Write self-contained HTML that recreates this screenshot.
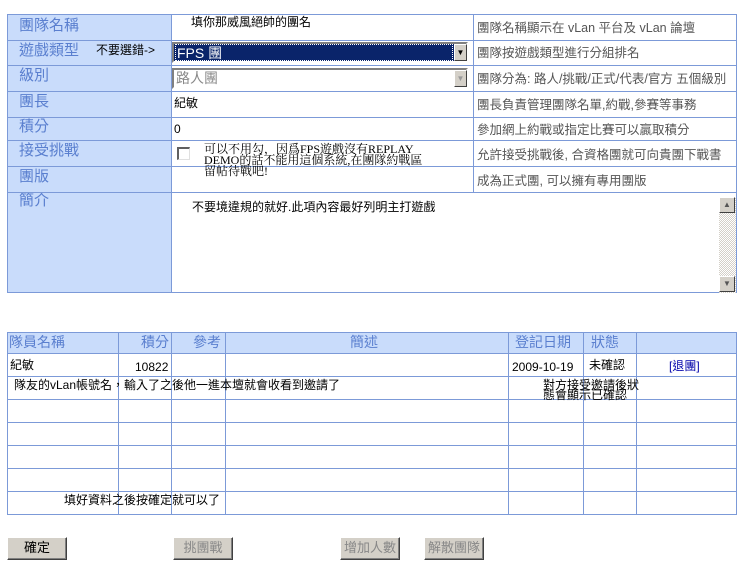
<!DOCTYPE html>
<html><head><meta charset="utf-8"><style>
body{margin:0;width:755px;height:576px;background:#fff;position:relative;overflow:hidden;font-family:"Liberation Sans","Noto Sans CJK TC","WenQuanYi Zen Hei",sans-serif;}
div{position:absolute;box-sizing:border-box;}
.lb{background:#c9dcfb;color:#5a7fcf;font-size:15px;padding-left:12px;line-height:22px;}
.h{background:#c9dcfb;color:#5a7fcf;font-size:14px;line-height:20px;}
.hl{background:#7c9ad8;}
.t{color:#000;font-size:12px;white-space:nowrap;line-height:14px;}
.d{color:#555;font-size:12.5px;white-space:nowrap;padding-left:3px;}
.btn{background:#d4d0c8;border:1px solid;border-color:#fff #404040 #404040 #fff;box-shadow:inset -1px -1px #808080;font-size:13px;text-align:center;line-height:20px;}
.arr{background:#d4d0c8;border:1px solid;border-color:#fff #404040 #404040 #fff;font-size:8px;text-align:center;line-height:15px}
</style></head><body>
<div class="lb" style="left:7px;top:14px;width:164px;height:279px;"></div>
<div class="lb" style="left:7px;top:14px;width:164px;height:26px;line-height:24px">團隊名稱</div>
<div class="lb" style="left:7px;top:40px;width:164px;height:25px;">遊戲類型</div>
<div class="lb" style="left:7px;top:65px;width:164px;height:26px;">級別</div>
<div class="lb" style="left:7px;top:91px;width:164px;height:26px;">團長</div>
<div class="lb" style="left:7px;top:117px;width:164px;height:23px;line-height:20px">積分</div>
<div class="lb" style="left:7px;top:140px;width:164px;height:26px;">接受挑戰</div>
<div class="lb" style="left:7px;top:166px;width:164px;height:26px;">團版</div>
<div class="lb" style="left:7px;top:192px;width:164px;height:20px;line-height:18px">簡介</div>
<div class="t" style="left:96px;top:43px;">不要選錯-&gt;</div>
<div class="hl" style="left:7px;top:14px;width:730px;height:1px"></div>
<div class="hl" style="left:7px;top:40px;width:730px;height:1px"></div>
<div class="hl" style="left:7px;top:65px;width:730px;height:1px"></div>
<div class="hl" style="left:7px;top:91px;width:730px;height:1px"></div>
<div class="hl" style="left:7px;top:117px;width:730px;height:1px"></div>
<div class="hl" style="left:7px;top:140px;width:730px;height:1px"></div>
<div class="hl" style="left:7px;top:166px;width:730px;height:1px"></div>
<div class="hl" style="left:7px;top:192px;width:730px;height:1px"></div>
<div class="hl" style="left:7px;top:292px;width:730px;height:1px"></div>
<div class="hl" style="left:7px;top:14px;width:1px;height:279px"></div>
<div class="hl" style="left:171px;top:14px;width:1px;height:279px"></div>
<div class="hl" style="left:473px;top:14px;width:1px;height:178px"></div>
<div class="hl" style="left:736px;top:14px;width:1px;height:279px"></div>
<div class="t" style="left:191px;top:15px;">填你那威風絕帥的團名</div>
<div style="left:172px;top:42px;width:296px;height:21px;border:2px solid;border-color:#808080 #fff #fff #808080;background:#0a246a;"></div>
<div style="left:175px;top:44px;width:278px;height:17px;border:1px dotted #fff;color:#fff;font-size:14px;line-height:16px;padding-left:1px">FPS 團</div>
<div class="arr" style="left:454px;top:44px;width:13px;height:17px;">▼</div>
<div style="left:172px;top:68px;width:296px;height:21px;border:2px solid;border-color:#808080 #fff #fff #808080;background:#fff;color:#888;font-size:14px;line-height:17px;padding-left:2px">路人團</div>
<div class="arr" style="left:454px;top:70px;width:13px;height:17px;color:#999">▼</div>
<div class="t" style="left:174px;top:96px;">紀敏</div>
<div class="t" style="left:174px;top:122px;">0</div>
<div style="left:177px;top:147px;width:13px;height:13px;border-style:solid;border-width:2px 1px 1px 2px;border-color:#606060 #e0e0e0 #e0e0e0 #606060;background:#fff"></div>
<div class="t" style="left:204px;top:144px;line-height:11px;font-family:'Liberation Serif','Noto Serif CJK SC',serif;">可以不用勾，因爲FPS遊戲沒有REPLAY<br>DEMO的話不能用這個系統,在團隊約戰區<br>留帖待戰吧!</div>
<div class="t" style="left:192px;top:200px;">不要境違規的就好.此項內容最好列明主打遊戲</div>
<div style="left:719px;top:197px;width:17px;height:96px;background:repeating-conic-gradient(#d4d0c8 0 25%,#fff 0 50%) 0 0/2px 2px"></div>
<div class="arr" style="left:719px;top:197px;width:16px;height:16px;line-height:14px;color:#555">▲</div>
<div class="arr" style="left:719px;top:276px;width:16px;height:16px;line-height:14px;color:#555">▼</div>
<div class="d" style="left:474px;top:17px;">團隊名稱顯示在 vLan 平台及 vLan 論壇</div>
<div class="d" style="left:474px;top:42px;">團隊按遊戲類型進行分組排名</div>
<div class="d" style="left:474px;top:68px;">團隊分為: 路人/挑戰/正式/代表/官方 五個級別</div>
<div class="d" style="left:474px;top:94px;">團長負責管理團隊名單,約戰,參賽等事務</div>
<div class="d" style="left:474px;top:119px;">參加網上約戰或指定比賽可以贏取積分</div>
<div class="d" style="left:474px;top:144px;">允許接受挑戰後, 合資格團就可向貴團下戰書</div>
<div class="d" style="left:474px;top:170px;">成為正式團, 可以擁有專用團版</div>

<div class="h" style="left:7px;top:332px;width:730px;height:21px"></div>
<div class="h" style="left:9px;top:332px;">隊員名稱</div>
<div class="h" style="left:141px;top:332px;">積分</div>
<div class="h" style="left:193px;top:332px;">參考</div>
<div class="h" style="left:350px;top:332px;">簡述</div>
<div class="h" style="left:515px;top:332px;">登記日期</div>
<div class="h" style="left:591px;top:332px;">狀態</div>
<div class="hl" style="left:7px;top:332px;width:730px;height:1px"></div>
<div class="hl" style="left:7px;top:353px;width:730px;height:1px"></div>
<div class="hl" style="left:7px;top:376px;width:730px;height:1px"></div>
<div class="hl" style="left:7px;top:399px;width:730px;height:1px"></div>
<div class="hl" style="left:7px;top:422px;width:730px;height:1px"></div>
<div class="hl" style="left:7px;top:445px;width:730px;height:1px"></div>
<div class="hl" style="left:7px;top:468px;width:730px;height:1px"></div>
<div class="hl" style="left:7px;top:491px;width:730px;height:1px"></div>
<div class="hl" style="left:7px;top:514px;width:730px;height:1px"></div>
<div class="hl" style="left:7px;top:332px;width:1px;height:183px"></div>
<div class="hl" style="left:118px;top:332px;width:1px;height:183px"></div>
<div class="hl" style="left:171px;top:332px;width:1px;height:183px"></div>
<div class="hl" style="left:225px;top:332px;width:1px;height:183px"></div>
<div class="hl" style="left:508px;top:332px;width:1px;height:183px"></div>
<div class="hl" style="left:583px;top:332px;width:1px;height:183px"></div>
<div class="hl" style="left:636px;top:332px;width:1px;height:183px"></div>
<div class="hl" style="left:736px;top:332px;width:1px;height:183px"></div>
<div class="t" style="left:10px;top:358px;">紀敏</div>
<div class="t" style="left:135px;top:360px;">10822</div>
<div class="t" style="left:512px;top:360px;">2009-10-19</div>
<div class="t" style="left:589px;top:358px;">未確認</div>
<div class="t" style="left:669px;top:359px;color:#00a">[退團]</div>
<div class="t" style="left:14px;top:378px;">隊友的vLan帳號名，輸入了之後他一進本壇就會收看到邀請了</div>
<div class="t" style="left:543px;top:380px;line-height:10px">對方接受邀請後狀<br>態會顯示已確認</div>
<div class="t" style="left:64px;top:493px;">填好資料之後按確定就可以了</div>
<div class="btn" style="left:7px;top:537px;width:60px;height:23px;">確定</div>
<div class="btn" style="left:173px;top:537px;width:60px;height:23px;color:#888">挑團戰</div>
<div class="btn" style="left:340px;top:537px;width:60px;height:23px;color:#888">增加人數</div>
<div class="btn" style="left:424px;top:537px;width:60px;height:23px;color:#888">解散團隊</div>
</body></html>
